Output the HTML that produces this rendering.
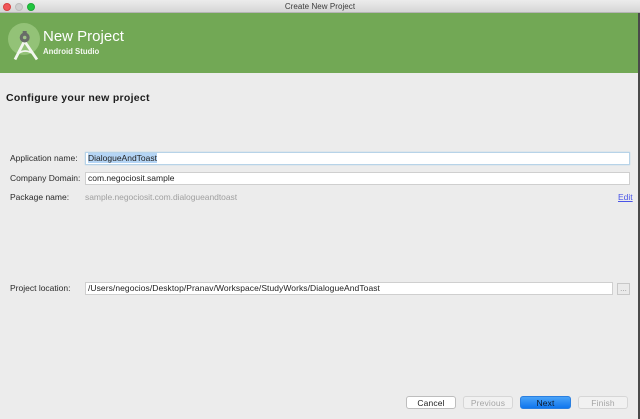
<!DOCTYPE html>
<html><head><meta charset="utf-8">
<style>
html,body{margin:0;padding:0;background:#ececec}
#w{position:relative;width:640px;height:419px;overflow:hidden;background:#ececec;font-family:"Liberation Sans",sans-serif;color:#222}
#w div{position:absolute;box-sizing:border-box;white-space:nowrap}
.l{font-size:8.5px;line-height:11px;color:#2a2a2a;letter-spacing:0}
.f{background:#fff;border:1px solid #cfcfcf;font-size:8.5px;line-height:10px;padding-left:2px;color:#222;letter-spacing:0}
.b{top:396px;height:13px;border-radius:3px;font-size:8.5px;line-height:12px;text-align:center;border:1px solid #d6d6d6;background:#f1f1f1;color:#a5a5a5;letter-spacing:.15px}
</style></head><body>
<div id="w">
<div style="left:0;top:0;width:640px;height:13px;background:linear-gradient(#ececec,#d6d6d6);border-bottom:1px solid #b5b5b5"></div>
<div style="left:3px;top:3px;width:8px;height:8px;border-radius:50%;background:#f0565a;border:1px solid #d8403f"></div>
<div style="left:15px;top:3px;width:8px;height:8px;border-radius:50%;background:#cfcfcf;border:1px solid #bdbdbd"></div>
<div style="left:27px;top:3px;width:8px;height:8px;border-radius:50%;background:#1fc63f;border:1px solid #1fa835"></div>
<div style="left:0;top:1px;width:640px;text-align:center;font-size:8px;line-height:11px;color:#3a3a3a;letter-spacing:.05px">Create New Project</div>

<div style="left:0;top:13px;width:640px;height:60px;background:#72a855"></div>
<svg style="position:absolute;left:7px;top:22px" width="34" height="40" viewBox="0 0 34 40">
<circle cx="17" cy="17" r="16" fill="#93c277"/>
<path d="M17 20L8 37.500M18 20L30 37.500" stroke="#f2f6ee" stroke-width="2.800" fill="none"/>
<path d="M10.500 32Q18 26 26.500 32" stroke="#f2f6ee" stroke-width="1.600" fill="none"/>
<circle cx="17.700" cy="15.500" r="5" fill="#686c68"/>
<rect x="15.700" y="9" width="4" height="4" fill="#686c68"/>
<circle cx="17.700" cy="15.500" r="1.800" fill="#9fc488"/>
</svg>
<div style="left:43px;top:28px;font-size:15px;line-height:18px;color:#fff;letter-spacing:0">New Project</div>
<div style="left:43px;top:46px;font-size:7.800px;line-height:11px;color:#f4f8f1;font-weight:700">Android Studio</div>

<div style="left:6px;top:92px;font-size:10.500px;line-height:13px;font-weight:700;color:#1c1c1c;letter-spacing:.28px">Configure your new project</div>

<div class="l" style="left:10px;top:153px">Application name:</div>
<div class="f" style="left:85px;top:152px;width:545px;height:13px;border-color:#b7d3e8;box-shadow:0 0 1px #a9cbe6"><span style="background:#b5d5f5">DialogueAndToast</span></div>
<div class="l" style="left:10px;top:173px">Company Domain:</div>
<div class="f" style="left:85px;top:172px;width:545px;height:13px">com.negociosit.sample</div>
<div class="l" style="left:10px;top:192px">Package name:</div>
<div class="l" style="left:85px;top:192px;color:#a0a0a0;letter-spacing:-.04px">sample.negociosit.com.dialogueandtoast</div>
<div class="l" style="left:618px;top:192px;color:#4a55e8;text-decoration:underline">Edit</div>

<div class="l" style="left:10px;top:283px">Project location:</div>
<div class="f" style="left:85px;top:282px;width:528px;height:13px;letter-spacing:.06px">/Users/negocios/Desktop/Pranav/Workspace/StudyWorks/DialogueAndToast</div>
<div style="left:617px;top:283px;width:13px;height:12px;border:1px solid #c8c8c8;background:#eaeaea;font-size:8px;line-height:9px;text-align:center;color:#999">...</div>

<div class="b" style="left:406px;width:50px;background:#fff;border-color:#bdbdbd;color:#222">Cancel</div>
<div class="b" style="left:463px;width:50px">Previous</div>
<div class="b" style="left:520px;width:51px;background:linear-gradient(#4aa3f8,#0f76ee);border-color:#2a7fe0;color:#0d1a2a">Next</div>
<div class="b" style="left:578px;width:50px">Finish</div>

<div style="left:638px;top:13px;width:2px;height:406px;background:#4a4a4a"></div>
</div>
</body></html>
